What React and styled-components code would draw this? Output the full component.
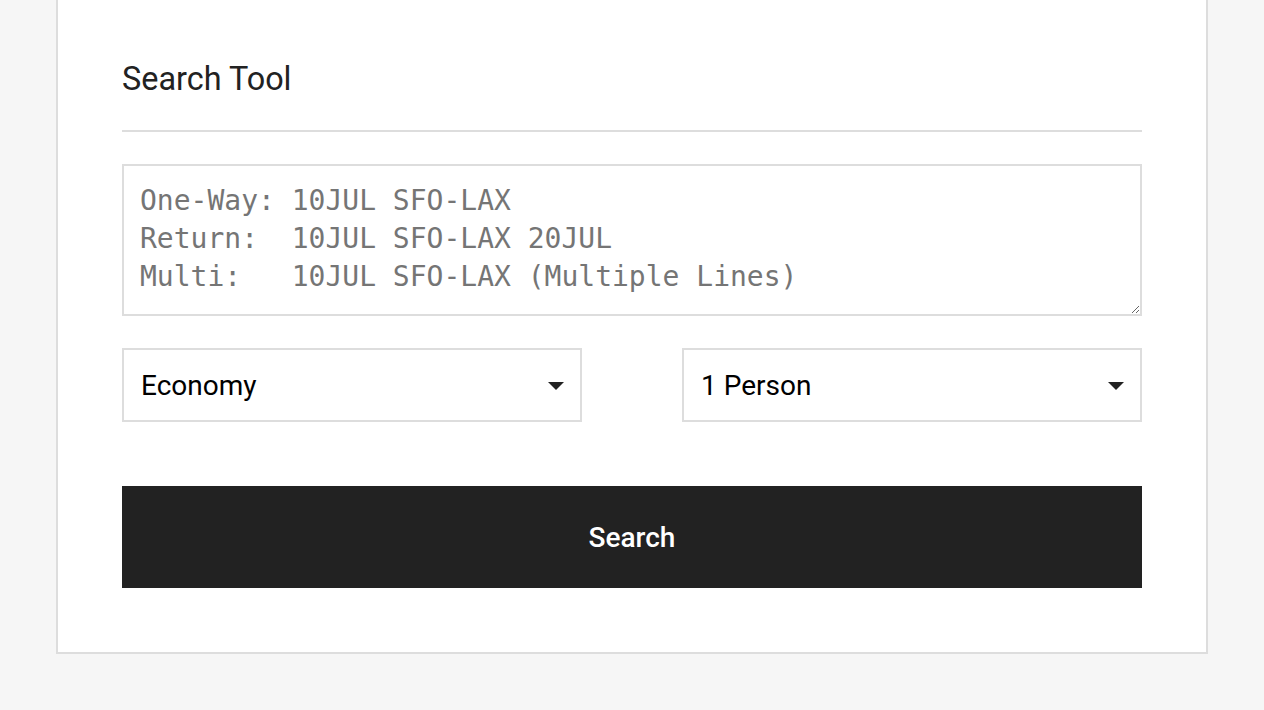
import React from 'react'
import styled, { createGlobalStyle } from 'styled-components'

const Global = createGlobalStyle`
    html, body {
        margin: 0;
        background: #f6f6f6;
        font-family: Roboto, "Liberation Sans", sans-serif;
    }
    * { box-sizing: border-box; }
`;

const Page = styled.div`
    padding: 0 56px 56px;
`;

const Card = styled.div`
    background: #fff;
    border: 2px solid #ddd;
    border-top: none;
    padding: 60px 64px 64px;
`;

const Title = styled.h2`
    margin: 0;
    font-size: 32.4px;
    line-height: 38px;
    font-weight: 400;
    color: #222;
`;

const Divider = styled.hr`
    margin: 32px 0;
    border: none;
    border-top: 2px solid #ddd;
`;

const Query = styled.textarea`
    display: block;
    width: 100%;
    height: 152px;
    margin: 0;
    padding: 16px;
    border: 2px solid #ddd;
    border-radius: 0;
    font-family: "DejaVu Sans Mono", "Liberation Mono", monospace;
    font-size: 28px;
    line-height: 38px;
    color: #222;
    outline: none;
    &::placeholder { color: #757575; }
`;

const Row = styled.div`
    display: flex;
    justify-content: space-between;
    margin-top: 32px;
`;

const SelectWrap = styled.div`
    position: relative;
    width: 460px;
`;

const Select = styled.select`
    display: block;
    width: 100%;
    height: 74px;
    padding: 0 48px 0 17px;
    border: 2px solid #ddd;
    border-radius: 0;
    background: #fff;
    appearance: none;
    font-family: Roboto, "Liberation Sans", sans-serif;
    font-size: 28px;
    color: #000;
    outline: none;
`;

const Caret = styled.svg`
    position: absolute;
    right: 18px;
    top: 34px;
    pointer-events: none;
`;

const Button = styled.button`
    display: block;
    width: 100%;
    height: 102px;
    margin-top: 64px;
    border: none;
    border-radius: 0;
    background: #222;
    color: #fff;
    font-family: Roboto, "Liberation Sans", sans-serif;
    font-size: 28px;
    font-weight: 500;
    cursor: pointer;
`;

function Dropdown({ options }) {
    return (
        <SelectWrap>
            <Select defaultValue={options[0]}>
                {options.map((o) => <option key={o}>{o}</option>)}
            </Select>
            <Caret width="16" height="8" viewBox="0 0 16 8">
                <path d="M0 0h16L8 8z" fill="#222" />
            </Caret>
        </SelectWrap>
    )
}

export default function App() {
    return (
        <>
            <Global />
            <Page>
                <Card>
                    <Title>Search Tool</Title>
                    <Divider />
                    <Query
                        placeholder={"One-Way: 10JUL SFO-LAX\nReturn:  10JUL SFO-LAX 20JUL\nMulti:   10JUL SFO-LAX (Multiple Lines)"}
                    />
                    <Row>
                        <Dropdown options={["Economy", "Premium Economy", "Business", "First"]} />
                        <Dropdown options={["1 Person", "2 People", "3 People", "4 People"]} />
                    </Row>
                    <Button>Search</Button>
                </Card>
            </Page>
        </>
    )
}
